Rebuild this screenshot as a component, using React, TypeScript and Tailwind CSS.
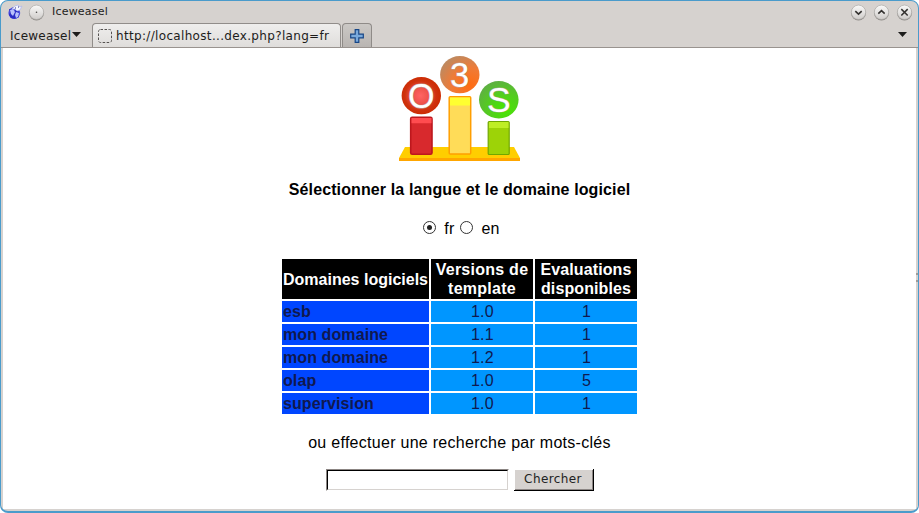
import type { ReactNode } from "react";

const rows = [
  ["esb", "1.0", "1"],
  ["mon domaine", "1.1", "1"],
  ["mon domaine", "1.2", "1"],
  ["olap", "1.0", "5"],
  ["supervision", "1.0", "1"],
];

function RoundButton({ children }: { children: ReactNode }) {
  return (
    <svg width="17" height="17" viewBox="0 0 17 17" className="shrink-0">
      <defs>
        <linearGradient id="knob" x1="0" y1="0" x2="0" y2="1">
          <stop offset="0" stopColor="#fafaf9" />
          <stop offset="1" stopColor="#cfccca" />
        </linearGradient>
      </defs>
      <circle cx="8.5" cy="9" r="7.4" fill="#8f8c89" />
      <circle cx="8.5" cy="8.3" r="7.2" fill="url(#knob)" stroke="#a5a29f" strokeWidth=".6" />
      {children}
    </svg>
  );
}

function AppIcon() {
  return (
    <svg width="16" height="16" viewBox="0 0 16 16" className="shrink-0">
      <circle cx="7.3" cy="9" r="5.9" fill="#4d50df" />
      <path d="M2 5 3 8 2 11 4 14Q8 16 12 13L11 11 12 8 9 6 6 8 5 5Z" fill="#2b2dc4" />
      <path d="M3 6 6 5 8 8 6 12 4 10ZM9 8l3 1-1 4-2 1-1-3Z" fill="#b9c1fb" />
      <path d="M5 5 8 2 11 1 13 3 15 2 13 6 10 7 8 5Z" fill="#f3f5ff" stroke="#aeb5e9" strokeWidth=".7" />
      <path d="M8 4h1M11 3h1" stroke="#313184" />
    </svg>
  );
}

function Logo() {
  return (
    <svg width="123" height="106" viewBox="398 56 123 106" className="mt-2 shrink-0">
      <defs>
        <radialGradient id="red" cx=".48" cy=".5" r=".55">
          <stop offset="0" stopColor="#ff6464" />
          <stop offset=".42" stopColor="#ed5149" />
          <stop offset=".72" stopColor="#cf320e" />
          <stop offset="1" stopColor="#cb2a00" />
        </radialGradient>
        <radialGradient id="orange" cx=".75" cy=".78" r=".85">
          <stop offset="0" stopColor="#ff6c12" />
          <stop offset=".55" stopColor="#ef7b37" />
          <stop offset="1" stopColor="#bf895f" />
        </radialGradient>
        <radialGradient id="green" cx=".65" cy=".75" r=".8">
          <stop offset="0" stopColor="#47e800" />
          <stop offset=".55" stopColor="#54cb20" />
          <stop offset="1" stopColor="#5fae45" />
        </radialGradient>
      </defs>
      <path d="M405 147H514L520 158H399Z" fill="#ffce00" />
      <path d="M399 158H520V161H399Z" fill="#ffa600" />
      <rect x="410.7" y="117.3" width="21.3" height="37" rx="1.5" fill="#d8292d" stroke="#bd171d" strokeWidth="1.6" />
      <path d="M411.5 118h20v5.2h-20Z" fill="#ff4c50" />
      <rect x="449.2" y="96.7" width="21.5" height="57.3" rx="1" fill="#ffdc58" stroke="#ff9e00" strokeWidth="1.5" />
      <path d="M450 97.5h20v8h-20Z" fill="#ffff31" />
      <rect x="488.2" y="121.5" width="21" height="33" rx="1" fill="#9dd307" stroke="#70a700" strokeWidth="1.2" />
      <path d="M489 122h19.5v6H489Z" fill="#beee25" />
      <ellipse cx="421.3" cy="95.7" rx="19.7" ry="18.6" fill="url(#red)" />
      <ellipse cx="459.8" cy="74.7" rx="19.7" ry="18.6" fill="url(#orange)" />
      <ellipse cx="498.8" cy="99.8" rx="19.8" ry="18.7" fill="url(#green)" />
      <g fill="#fff" stroke="#b8a9a0" strokeWidth=".9" paintOrder="stroke" fontFamily="'Liberation Sans', Arial, sans-serif" textAnchor="middle">
        <text x="421.2" y="108" fontSize="35" textLength="26.5" lengthAdjust="spacingAndGlyphs">O</text>
        <text x="459.6" y="86.5" fontSize="34.5">3</text>
        <text x="498.8" y="112.3" fontSize="35.5">S</text>
      </g>
    </svg>
  );
}

export default function App() {
  return (
    <div className="flex h-[513px] w-[919px] flex-col overflow-hidden rounded-lg border-x border-t border-b-2 border-[#4a9bcb] bg-[#d6d2cf] font-['DejaVu_Sans',sans-serif] text-[12px] text-[#1d1c1b]">
      <header className="flex h-[22px] shrink-0 items-center pl-[6px] pr-[5px] text-[11px]">
        <AppIcon />
        <div className="ml-[5px] flex">
          <RoundButton><circle cx="8.5" cy="8.3" r=".8" fill="#494745" /></RoundButton>
        </div>
        <span className="ml-[7px] tracking-[0.2px]">Iceweasel</span>
        <div className="ml-auto flex gap-[6px]">
          <RoundButton><path d="m5.3 7.2 3.2 3 3.2-3" fill="none" stroke="#343230" strokeWidth="1.6" /></RoundButton>
          <RoundButton><path d="m5.3 9.7 3.2-3 3.2 3" fill="none" stroke="#343230" strokeWidth="1.6" /></RoundButton>
          <RoundButton><path d="m5.3 5.1 6.4 6.4m0-6.4-6.4 6.4" fill="none" stroke="#343230" strokeWidth="1.5" /></RoundButton>
        </div>
      </header>
      <nav className="flex h-[25px] shrink-0 items-end border-b border-[#99938f]">
        <div className="ml-[9px] flex h-[24px] w-[82px] items-center">
          <span className="pt-px tracking-[0.25px]">Iceweasel</span>
          <svg width="10" height="6" viewBox="0 0 10 6" className="ml-px"><path d="M0 0h9L4.5 5Z" fill="#1d1c1b" /></svg>
        </div>
        <div className="flex h-[24px] w-[249px] items-center rounded-t-[4px] border border-b-0 border-[#918d8a] bg-linear-to-b from-[#efeeed] to-[#dfdddb] pl-[5px]">
          <svg width="14" height="14" viewBox="0 0 14 14"><rect x=".5" y=".5" width="13" height="13" rx="2" fill="none" stroke="#555250" strokeDasharray="2.5 1.5" /></svg>
          <span className="ml-[4px] whitespace-nowrap tracking-[0.33px]">http://localhost...dex.php?lang=fr</span>
        </div>
        <div className="ml-px flex h-[24px] w-[30px] items-center justify-center rounded-t-[4px] border border-b-0 border-[#8f8b88] bg-linear-to-b from-[#cbc8c5] to-[#b9b5b2]">
          <svg width="14" height="14" viewBox="0 0 14 14"><path d="M5.2.7h3.6v4.5h4.5v3.6H8.8v4.5H5.2V8.8H.7V5.2h4.5Z" fill="#79a9dc" stroke="#164687" strokeWidth="1.2" /></svg>
        </div>
        <svg width="10" height="6" viewBox="0 0 10 6" className="mb-[9px] ml-auto mr-[10px]"><path d="M0 0h9L4.5 5Z" fill="#1d1c1b" /></svg>
      </nav>
      <div className="flex min-h-0 flex-1">
        <div className="w-[2px] shrink-0" />
        <main className="mb-[2px] flex flex-1 flex-col items-center overflow-hidden bg-white font-['Liberation_Sans',Arial,sans-serif] text-[16px] leading-[19px] text-black">
          <Logo />
          <h1 className="mt-[18px] h-[19px] whitespace-nowrap font-bold tracking-[0.12px]">Sélectionner la langue et le domaine logiciel</h1>
          <div className="mt-[20px] flex h-[19px] items-center pl-[4px]">
            <span className="mb-[2px] flex size-[13px] items-center justify-center rounded-full border border-[#333]"><i className="size-[5px] rounded-full bg-[#222]" /></span>
            <span className="ml-[8px] tracking-[0.2px]">fr</span>
            <span className="mb-[2px] ml-[6px] size-[13px] rounded-full border border-[#333]" />
            <span className="ml-[8px] tracking-[0.2px]">en</span>
          </div>
          <table className="mt-[19px] w-[359px] shrink-0 table-fixed border-separate border-spacing-[2px]">
            <colgroup><col className="w-[147px]" /><col className="w-[102px]" /><col className="w-[102px]" /></colgroup>
            <thead>
              <tr className="h-[40px] bg-black text-white">
                <th className="whitespace-nowrap p-px">Domaines logiciels</th>
                <th className="whitespace-nowrap p-px tracking-[0.25px]">Versions de<br />template</th>
                <th className="whitespace-nowrap p-px tracking-[0.1px]">Evaluations<br />disponibles</th>
              </tr>
            </thead>
            <tbody className="text-[#10194f]">
              {rows.map(([name, version, count], i) => (
                <tr key={i} className="h-[21px]">
                  <td className="bg-[#0046ff] p-px text-left font-bold tracking-[0.1px]">{name}</td>
                  <td className="bg-[#0096ff] p-px pl-[2px] text-center tracking-[0.3px]">{version}</td>
                  <td className="bg-[#0096ff] p-px pl-[2px] text-center">{count}</td>
                </tr>
              ))}
            </tbody>
          </table>
          <p className="mt-[17px] h-[19px] whitespace-nowrap tracking-[0.28px]">ou effectuer une recherche par mots-clés</p>
          <div className="mt-[17px] flex h-[22px] gap-[5px]">
            <div className="h-[22px] w-[183px] border border-b-white border-l-[#8b8583] border-r-white border-t-[#8b8583]">
              <input aria-label="mots-clés" className="block h-[20px] w-full border border-b-[#d6d2cf] border-l-black border-r-[#d6d2cf] border-t-black bg-white outline-none" />
            </div>
            <button className="h-[22px] w-[80px] border-b border-r border-black bg-[#d6d2cf] font-['DejaVu_Sans',sans-serif] text-[12px] tracking-[0.4px] text-[#222] shadow-[inset_1px_1px_0_#fff,inset_-1px_-1px_0_#8b8583]">Chercher</button>
          </div>
        </main>
        <div className="flex w-[2px] shrink-0 items-center bg-[#d6d2cf]"><i className="mb-[4px] h-[9px] w-[2px] border-y-2 border-[#a19b98]" /></div>
      </div>
    </div>
  );
}
